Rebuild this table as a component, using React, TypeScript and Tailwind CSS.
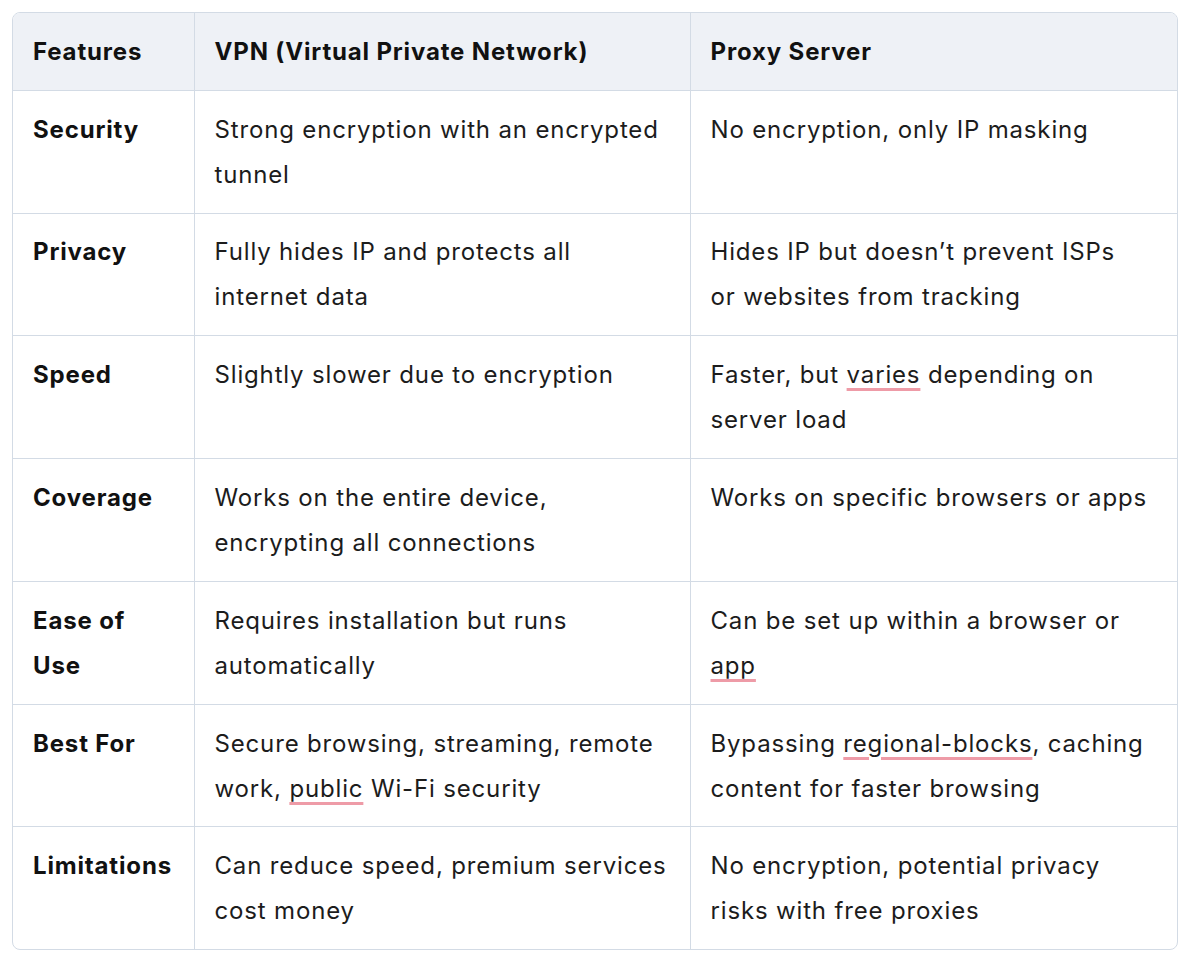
const rows: { feature: string; vpn: React.ReactNode; proxy: React.ReactNode }[] = [
  {
    feature: "Security",
    vpn: "Strong encryption with an encrypted tunnel",
    proxy: "No encryption, only IP masking",
  },
  {
    feature: "Privacy",
    vpn: "Fully hides IP and protects all internet data",
    proxy: (
      <>
        Hides IP but doesn&rsquo;t prevent ISPs
        <br />
        or websites from tracking
      </>
    ),
  },
  {
    feature: "Speed",
    vpn: "Slightly slower due to encryption",
    proxy: (
      <>
        Faster, but <Squiggle>varies</Squiggle> depending on server load
      </>
    ),
  },
  {
    feature: "Coverage",
    vpn: "Works on the entire device, encrypting all connections",
    proxy: "Works on specific browsers or apps",
  },
  {
    feature: "Ease of Use",
    vpn: "Requires installation but runs automatically",
    proxy: (
      <>
        Can be set up within a browser or <Squiggle>app</Squiggle>
      </>
    ),
  },
  {
    feature: "Best For",
    vpn: (
      <>
        Secure browsing, streaming, remote work, <Squiggle>public</Squiggle> Wi-Fi security
      </>
    ),
    proxy: (
      <>
        Bypassing <Squiggle>regional-blocks</Squiggle>, caching content for faster browsing
      </>
    ),
  },
  {
    feature: "Limitations",
    vpn: "Can reduce speed, premium services cost money",
    proxy: "No encryption, potential privacy risks with free proxies",
  },
];

// spellcheck-style underline
function Squiggle({ children }: { children: React.ReactNode }) {
  return (
    <span className="underline decoration-[#ee9ba7] decoration-[3px] underline-offset-[5px]">
      {children}
    </span>
  );
}

export default function App() {
  return (
    <div className="min-h-screen bg-white p-3 font-['Inter',sans-serif] text-[24px] leading-[45px] tracking-[0.035em] text-[#1c1c1c]">
      <div className="overflow-hidden rounded-lg border border-[#d3dbe5]">
        <table className="w-full table-fixed border-collapse">
          <colgroup>
            <col className="w-[181px]" />
            <col className="w-[496px]" />
            <col />
          </colgroup>
          <thead>
            <tr className="bg-[#eef1f6] text-left text-[#111]">
              <th className="px-5 py-[15.9px] font-bold">Features</th>
              <th className="border-l border-[#d3dbe5] px-5 py-[15.9px] font-bold">VPN (Virtual Private Network)</th>
              <th className="border-l border-[#d3dbe5] py-[15.9px] pl-5 pr-7 font-bold">Proxy Server</th>
            </tr>
          </thead>
          <tbody>
            {rows.map((r) => (
              <tr key={r.feature} className="border-t border-[#d3dbe5] align-top">
                <td className="px-5 py-[15.9px] font-bold text-[#111]">{r.feature}</td>
                <td className="border-l border-[#d3dbe5] px-5 py-[15.9px]">{r.vpn}</td>
                <td className="border-l border-[#d3dbe5] py-[15.9px] pl-5 pr-7">{r.proxy}</td>
              </tr>
            ))}
          </tbody>
        </table>
      </div>
    </div>
  );
}
